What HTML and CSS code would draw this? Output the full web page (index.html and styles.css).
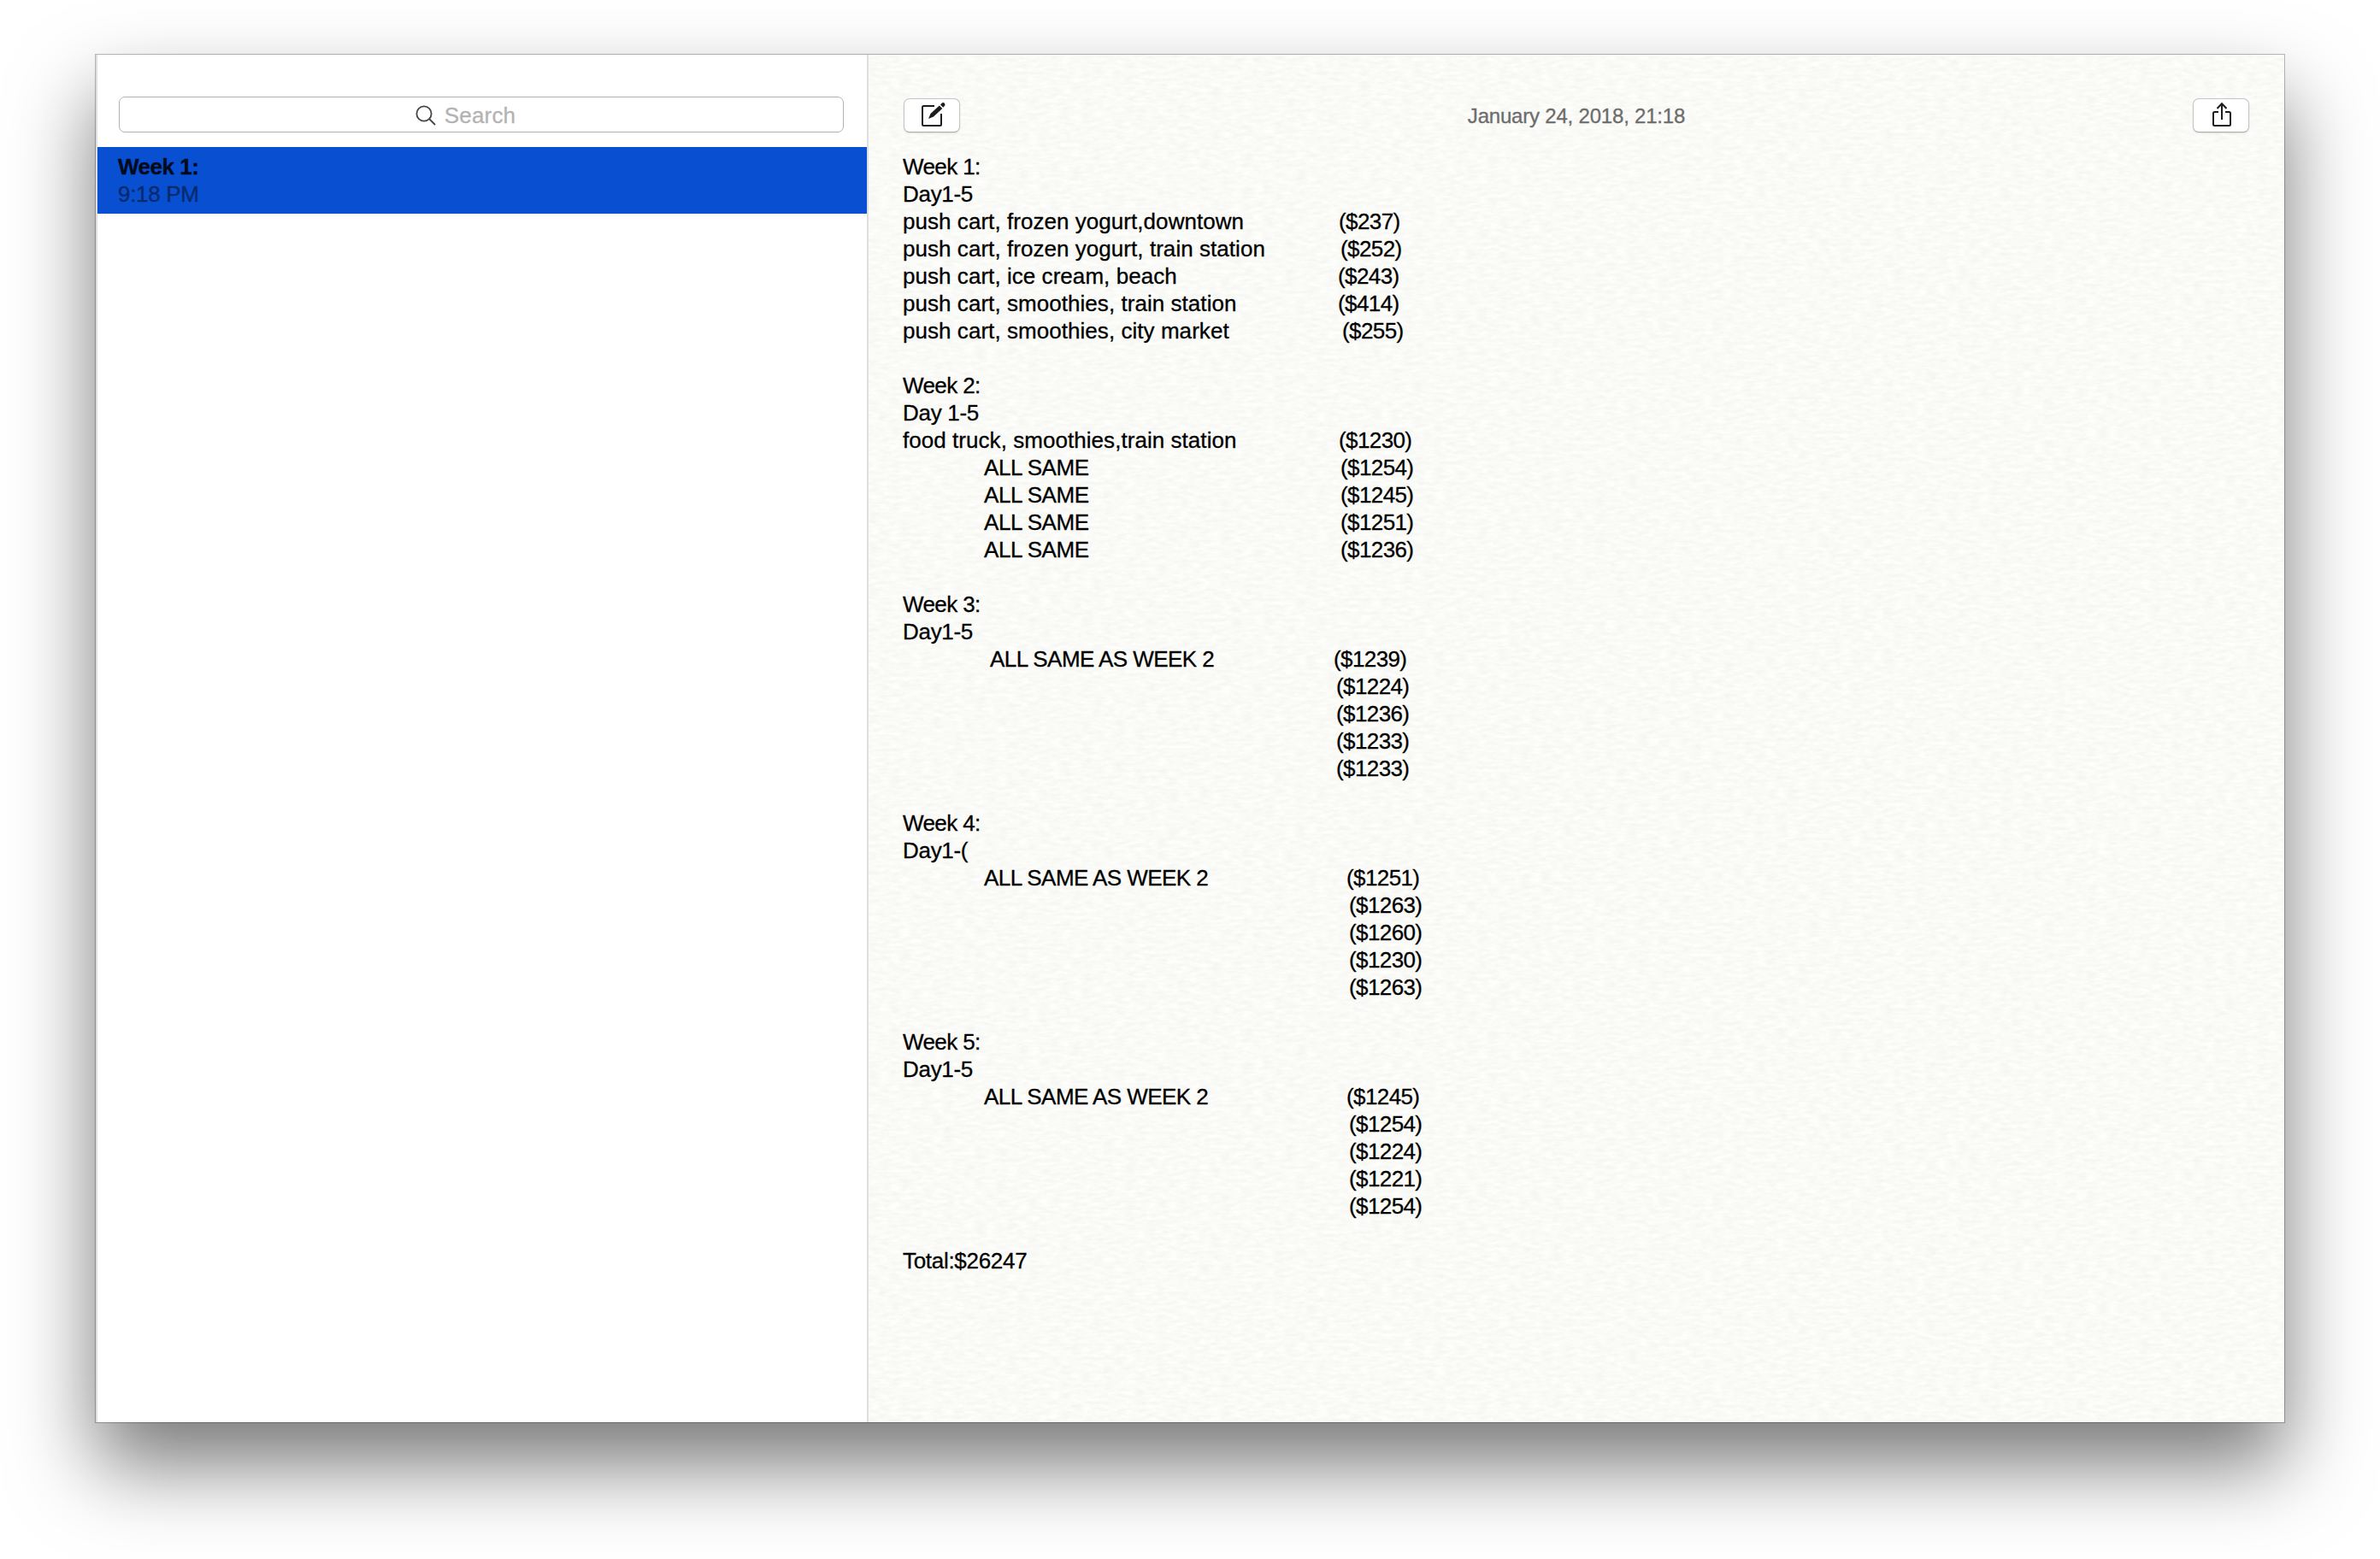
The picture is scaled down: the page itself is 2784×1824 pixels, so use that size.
FILE: index.html
```html
<!DOCTYPE html>
<html lang="en">

<head>
    <meta charset="UTF-8">
    <meta name="viewport" content="width=device-width, initial-scale=1.0">
    <title>Notes</title>
    <link rel="stylesheet" href="styles.css">
</head>

<body>
    <div class="window">
        <!-- Notes list -->
        <aside class="sidebar">
            <div class="search">
                <svg class="search-icon" viewBox="0 0 24 24">
                    <circle cx="10" cy="10" r="8.6" />
                    <path d="M16 16L23 23" />
                </svg>
                <span>Search</span>
            </div>
            <div class="note-item">
                <div class="note-title">Week 1:</div>
                <div class="note-time">9:18 PM</div>
            </div>
        </aside>

        <!-- Open note -->
        <main class="note">
            <svg class="paper">
                <filter id="grain" x="0" y="0" width="100%" height="100%" color-interpolation-filters="sRGB">
                    <feTurbulence type="fractalNoise" baseFrequency="0.08 0.25" numOctaves="5" seed="4" />
                    <feColorMatrix values="0.06 0 0 0 0.95  0.06 0 0 0 0.95  0.06 0 0 0 0.94  0 0 0 0 1" />
                </filter>
                <rect width="100%" height="100%" filter="url(#grain)" />
            </svg>

            <div class="toolbar">
                <div class="button">
                    <svg class="icon" viewBox="0 0 30 30">
                        <path class="line" d="M17 5H4.500Q3 5 3 6.500V26.500Q3 28 4.500 28H23.500Q25 28 25 26.500V14" />
                        <path class="fill" d="M10 20L12.500 14L22.800 4.600L26.300 8.100L16 17.500Z" />
                        <path class="fill" d="M24 3.500L26.200 1.300Q27.500 .5 28.800 1.800Q30 3.200 29.200 4.500L27.300 6.800Z" />
                    </svg>
                </div>
                <div class="date">January 24, 2018, 21:18</div>
                <div class="button">
                    <svg class="icon share" viewBox="0 0 30 30">
                        <path class="line" d="M11 12H6.500Q5 12 5 13.500V26.500Q5 28 6.500 28H23.500Q25 28 25 26.500V13.500Q25 12 23.500 12H19" />
                        <path class="line" d="M15 21V2.500M9.500 8L15 2.300L20.500 8" />
                    </svg>
                </div>
            </div>

            <div class="content">
                <p class="week">Week 1:</p>
                <p class="day">Day1-5</p>
                <p><span class="item">push cart, frozen yogurt,downtown</span><span class="price p4">($237)</span></p>
                <p><span class="item">push cart, frozen yogurt, train station</span><span class="price p5">($252)</span></p>
                <p><span class="item">push cart, ice cream, beach</span><span class="price p3">($243)</span></p>
                <p><span class="item">push cart, smoothies, train station</span><span class="price p3">($414)</span></p>
                <p><span class="item">push cart, smoothies, city market</span><span class="price p6">($255)</span></p>
                <br>
                <p class="week">Week 2:</p>
                <p class="day">Day 1-5</p>
                <p><span class="item">food truck, smoothies,train station</span><span class="price p4">($1230)</span></p>
                <p><span class="item same">ALL SAME</span><span class="price p5">($1254)</span></p>
                <p><span class="item same">ALL SAME</span><span class="price p5">($1245)</span></p>
                <p><span class="item same">ALL SAME</span><span class="price p5">($1251)</span></p>
                <p><span class="item same">ALL SAME</span><span class="price p5">($1236)</span></p>
                <br>
                <p class="week">Week 3:</p>
                <p class="day">Day1-5</p>
                <p><span class="item same same-week indent">ALL SAME AS WEEK 2</span><span class="price p1">($1239)</span></p>
                <p><span class="item"></span><span class="price p2">($1224)</span></p>
                <p><span class="item"></span><span class="price p2">($1236)</span></p>
                <p><span class="item"></span><span class="price p2">($1233)</span></p>
                <p><span class="item"></span><span class="price p2">($1233)</span></p>
                <br>
                <p class="week">Week 4:</p>
                <p class="day">Day1-(</p>
                <p><span class="item same same-week">ALL SAME AS WEEK 2</span><span class="price p7">($1251)</span></p>
                <p><span class="item"></span><span class="price p8">($1263)</span></p>
                <p><span class="item"></span><span class="price p8">($1260)</span></p>
                <p><span class="item"></span><span class="price p8">($1230)</span></p>
                <p><span class="item"></span><span class="price p8">($1263)</span></p>
                <br>
                <p class="week">Week 5:</p>
                <p class="day">Day1-5</p>
                <p><span class="item same same-week">ALL SAME AS WEEK 2</span><span class="price p7">($1245)</span></p>
                <p><span class="item"></span><span class="price p8">($1254)</span></p>
                <p><span class="item"></span><span class="price p8">($1224)</span></p>
                <p><span class="item"></span><span class="price p8">($1221)</span></p>
                <p><span class="item"></span><span class="price p8">($1254)</span></p>
                <br>
                <p class="day">Total:$26247</p>
            </div>
        </main>
    </div>
</body>

</html>
```

FILE: styles.css
```css
* {
    box-sizing: border-box;
}

body {
    margin: 0;
    padding: 64px 112px 0;
    height: 1824px;
    overflow: hidden;
    background-color: white;
    font-family: "Liberation Sans", Arial, sans-serif;
    font-size: 26px;
    line-height: 32px;
    color: black;
    -webkit-text-stroke: 0.3px;
}

.window {
    display: flex;
    width: 2560px;
    height: 1600px;
    background-color: white;
    box-shadow: 0 0 0 1px rgba(0, 0, 0, 0.26), 0 50px 90px rgba(0, 0, 0, 0.53);
}

/* Sidebar */
.sidebar {
    flex: none;
    width: 904px;
    padding-top: 49px;
    border-left: 2px solid #dedede;
    border-right: 2px solid #dedede;
}

.search {
    display: flex;
    justify-content: center;
    align-items: center;
    gap: 10px;
    height: 42px;
    margin: 0 27px 17px 25px;
    padding: 2px 37px 0 0;
    border: 1px solid #b2b2b2;
    border-radius: 7px;
    letter-spacing: 0.2px;
    color: #b3b3b3;
}

.search-icon {
    width: 24px;
    height: 24px;
    fill: none;
    stroke: #444;
    stroke-width: 1.8;
}

.note-item {
    height: 78px;
    padding: 7px 24px;
    background-color: #084fd1;
}

.note-title {
    font-weight: bold;
    letter-spacing: -0.5px;
    color: #020a1b;
}

.note-time {
    letter-spacing: -0.3px;
    color: #062a6b;
}

/* Note */
.note {
    position: relative;
    flex: 1;
    background-color: #fafaf8;
}

.paper {
    position: absolute;
    top: 0;
    left: 0;
    width: 100%;
    height: 100%;
}

.toolbar {
    position: relative;
    display: flex;
    justify-content: space-between;
    align-items: center;
    padding: 51px 41px 0;
}

.button {
    display: flex;
    justify-content: center;
    align-items: center;
    width: 66px;
    height: 40px;
    background-color: white;
    border: 1px solid #c4c4c2;
    border-bottom-color: #adada9;
    border-radius: 7px;
    box-shadow: 0 1px 2px rgba(0, 0, 0, 0.12);
}

.icon {
    width: 30px;
    height: 30px;
    margin: 0 0 2px 2px;
}

.line {
    fill: none;
    stroke: #1c1c1c;
    stroke-width: 2;
}

.fill {
    fill: #1c1c1c;
}

.date {
    padding-top: 2px;
    font-size: 24px;
    letter-spacing: -0.2px;
    color: #6c6c6b;
}

.content {
    position: relative;
    padding: 24px 40px;
}

.content p {
    display: flex;
    height: 32px;
    margin: 0;
    white-space: nowrap;
}

.content .week {
    letter-spacing: -0.6px;
}

.content .day {
    letter-spacing: -0.3px;
}

.item {
    width: 501px;
    letter-spacing: 0.05px;
}

.same {
    padding-left: 95px;
    letter-spacing: -0.45px;
}

.same-week {
    letter-spacing: -0.55px;
}

.indent {
    padding-left: 102px;
}

.price {
    letter-spacing: -0.6px;
}

.p1 { padding-left: 3px; }
.p2 { padding-left: 6px; }
.p3 { padding-left: 8px; }
.p4 { padding-left: 9px; }
.p5 { padding-left: 11px; }
.p6 { padding-left: 13px; }
.p7 { padding-left: 18px; }
.p8 { padding-left: 21px; }
```
